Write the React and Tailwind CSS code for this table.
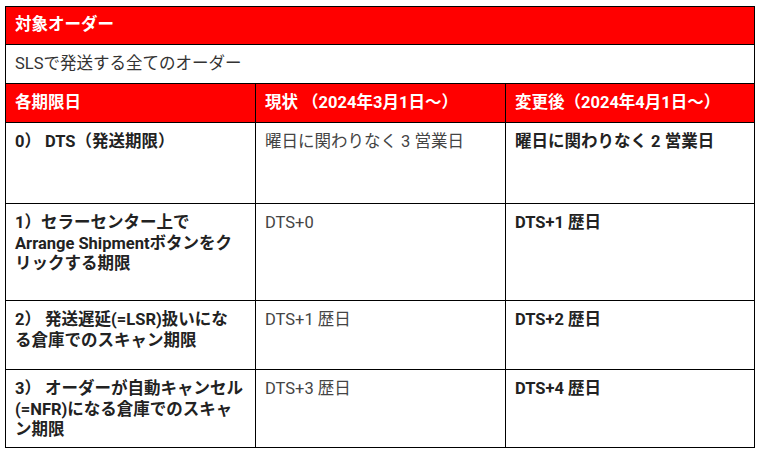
const font = { fontFamily: 'Roboto, "Noto Sans CJK JP", sans-serif' };

const ROWS = [
  {
    h: "h-[81px]",
    label: ["0） DTS（発送期限）"],
    now: "曜日に関わりなく 3 営業日",
    next: "曜日に関わりなく 2 営業日",
  },
  {
    h: "h-[97px]",
    label: ["1）セラーセンター上で", "Arrange Shipmentボタンをク", "リックする期限"],
    now: "DTS+0",
    next: "DTS+1 歴日",
  },
  {
    h: "h-[69px]",
    label: ["2） 発送遅延(=LSR)扱いにな", "る倉庫でのスキャン期限"],
    now: "DTS+1 歴日",
    next: "DTS+2 歴日",
  },
  {
    h: "h-[78px]",
    label: ["3） オーダーが自動キャンセル", "(=NFR)になる倉庫でのスキャ", "ン期限"],
    now: "DTS+3 歴日",
    next: "DTS+4 歴日",
  },
];

const cols = "grid grid-cols-[250px_250px_249px]";

export default function App() {
  return (
    <div className="min-h-screen bg-white pt-[6px] pl-[5px]" style={font}>
      <div className="w-[750px] border-l border-t border-black text-[16.5px] leading-[20.5px]">
        {/* 対象オーダー */}
        <div className="h-[38px] bg-[#ff0000] border-r border-b border-black flex items-center px-[9px] font-bold text-white">
          対象オーダー
        </div>
        <div className="h-[39px] border-r border-b border-black flex items-center px-[9px] text-[#333]">
          SLSで発送する全てのオーダー
        </div>

        {/* header */}
        <div className={cols}>
          {["各期限日", "現状 （2024年3月1日〜）", "変更後（2024年4月1日〜）"].map((t) => (
            <div key={t} className="h-[39px] bg-[#ff0000] border-r border-b border-black flex items-center px-[9px] font-bold text-white whitespace-nowrap">
              {t}
            </div>
          ))}
        </div>

        {ROWS.map((r, i) => (
          <div key={i} className={cols}>
            <div className={`${r.h} border-r border-b border-black px-[9px] pt-[9px] font-bold text-[#222]`}>
              {r.label.map((l) => (
                <div key={l} className="whitespace-nowrap">{l}</div>
              ))}
            </div>
            <div className={`${r.h} border-r border-b border-black px-[9px] pt-[9px] text-[#444] whitespace-nowrap`}>
              {r.now}
            </div>
            <div className={`${r.h} border-r border-b border-black px-[9px] pt-[9px] font-bold text-[#222] whitespace-nowrap`}>
              {r.next}
            </div>
          </div>
        ))}
      </div>
    </div>
  );
}
